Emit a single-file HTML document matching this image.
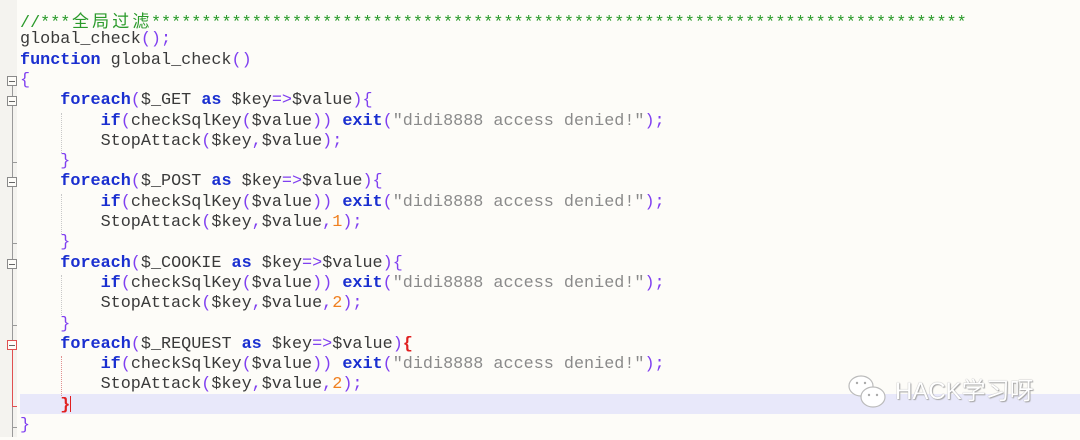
<!DOCTYPE html>
<html><head><meta charset="utf-8"><style>
html,body{margin:0;padding:0}
body{width:1080px;height:437px;background:#fdfcf8;position:relative;overflow:hidden;font-family:"Liberation Mono",monospace;font-size:16.8px;}
.gut{position:absolute;left:0;top:0;width:17px;height:437px;background:#f4f3ef}
.vl{position:absolute;left:12px;width:1px;background:#9a9a9a}
.box{position:absolute;left:7px;width:10px;height:10px;border:1px solid #8a8a8a;background:#fdfcf8;box-sizing:border-box}
.box:after{content:"";position:absolute;left:1px;top:3.5px;width:6px;height:1px;background:#666}
.tk{position:absolute;left:12px;width:5px;height:1px;background:#9a9a9a}
.ln{position:absolute;left:20px;height:20.3px;line-height:20.3px;white-space:pre;color:#3a3a3a}
.k{color:#1a2fd0;font-weight:bold}
.p{color:#8040f0}
.c{color:#2a9a2a}
.s{color:#8a8a8a}
.n{color:#f08020}
.cj{font-family:"Noto Sans CJK SC",sans-serif;display:inline-block;width:20.16px;text-align:center;font-size:17px}
.hl{position:absolute;left:20px;top:394px;width:1060px;height:20px;background:#e8e8fa}
.ig{position:absolute;width:0;border-left:1px dotted #c8c8c8}
#w{position:absolute;left:0;top:3px;width:1080px;height:437px}
</style></head><body>
<div class="gut"></div>
<div class="hl"></div>
<div class="vl" style="top:77px;height:360px"></div>
<div class="vl" style="top:345px;height:62px;background:#e05050;left:12px"></div>
<div class="tk" style="top:162px"></div>
<div class="tk" style="top:243px"></div>
<div class="tk" style="top:325px"></div>
<div class="tk" style="top:406px;background:#e05050"></div>
<div class="tk" style="top:427px"></div>
<div class="box" style="top:76px"></div>
<div class="box" style="top:96px"></div>
<div class="box" style="top:177px"></div>
<div class="box" style="top:259px"></div>
<div class="box" style="top:340px;border-color:#e05050"></div>
<div class="ig" style="left:61px;top:113px;height:40px"></div>
<div class="ig" style="left:61px;top:194px;height:40px"></div>
<div class="ig" style="left:61px;top:275px;height:40px"></div>
<div class="ig" style="left:61px;top:356px;height:40px;border-color:#e09090"></div>
<div id="w">
<div class="ln" style="top:7px"><span class="c">//***<span class="cj">全</span><span class="cj">局</span><span class="cj">过</span><span class="cj">滤</span>*********************************************************************************</span></div>
<div class="ln" style="top:27.3px">global_check<span class="p">();</span></div>
<div class="ln" style="top:47.6px"><span class="k">function</span> global_check<span class="p">()</span></div>
<div class="ln" style="top:67.9px"><span class="p">{</span></div>
<div class="ln" style="top:88.2px">    <span class="k">foreach</span><span class="p">(</span>$_GET <span class="k">as</span> $key<span class="p">=&gt;</span>$value<span class="p">){</span></div>
<div class="ln" style="top:108.5px">        <span class="k">if</span><span class="p">(</span>checkSqlKey<span class="p">(</span>$value<span class="p">))</span> <span class="k">exit</span><span class="p">(</span><span class="s">"didi8888 access denied!"</span><span class="p">);</span></div>
<div class="ln" style="top:128.8px">        StopAttack<span class="p">(</span>$key<span class="p">,</span>$value<span class="p">);</span></div>
<div class="ln" style="top:149.1px">    <span class="p">}</span></div>
<div class="ln" style="top:169.4px">    <span class="k">foreach</span><span class="p">(</span>$_POST <span class="k">as</span> $key<span class="p">=&gt;</span>$value<span class="p">){</span></div>
<div class="ln" style="top:189.7px">        <span class="k">if</span><span class="p">(</span>checkSqlKey<span class="p">(</span>$value<span class="p">))</span> <span class="k">exit</span><span class="p">(</span><span class="s">"didi8888 access denied!"</span><span class="p">);</span></div>
<div class="ln" style="top:210px">        StopAttack<span class="p">(</span>$key<span class="p">,</span>$value<span class="p">,</span><span class="n">1</span><span class="p">);</span></div>
<div class="ln" style="top:230.3px">    <span class="p">}</span></div>
<div class="ln" style="top:250.6px">    <span class="k">foreach</span><span class="p">(</span>$_COOKIE <span class="k">as</span> $key<span class="p">=&gt;</span>$value<span class="p">){</span></div>
<div class="ln" style="top:270.9px">        <span class="k">if</span><span class="p">(</span>checkSqlKey<span class="p">(</span>$value<span class="p">))</span> <span class="k">exit</span><span class="p">(</span><span class="s">"didi8888 access denied!"</span><span class="p">);</span></div>
<div class="ln" style="top:291.2px">        StopAttack<span class="p">(</span>$key<span class="p">,</span>$value<span class="p">,</span><span class="n">2</span><span class="p">);</span></div>
<div class="ln" style="top:311.5px">    <span class="p">}</span></div>
<div class="ln" style="top:331.8px">    <span class="k">foreach</span><span class="p">(</span>$_REQUEST <span class="k">as</span> $key<span class="p">=&gt;</span>$value<span class="p">)</span><span style="color:#e02020;font-weight:bold">{</span></div>
<div class="ln" style="top:352.1px">        <span class="k">if</span><span class="p">(</span>checkSqlKey<span class="p">(</span>$value<span class="p">))</span> <span class="k">exit</span><span class="p">(</span><span class="s">"didi8888 access denied!"</span><span class="p">);</span></div>
<div class="ln" style="top:372.4px">        StopAttack<span class="p">(</span>$key<span class="p">,</span>$value<span class="p">,</span><span class="n">2</span><span class="p">);</span></div>
<div class="ln" style="top:392.7px">    <span style="color:#e02020;font-weight:bold">}</span><span style="display:inline-block;width:1px;height:16px;background:#e02020;vertical-align:middle"></span></div>
<div class="ln" style="top:413px"><span class="p">}</span></div>
</div>
<svg style="position:absolute;left:847px;top:373px" width="44" height="40" viewBox="0 0 44 40">
<ellipse cx="14" cy="13" rx="12" ry="10" fill="#fff" stroke="#bbb" stroke-width="1.2"/>
<ellipse cx="26" cy="24" rx="12" ry="10" fill="#fff" stroke="#bbb" stroke-width="1.2"/>
<circle cx="10" cy="10" r="1.2" fill="#aaa"/><circle cx="18" cy="10" r="1.2" fill="#aaa"/>
<circle cx="22" cy="22" r="1.2" fill="#aaa"/><circle cx="30" cy="22" r="1.2" fill="#aaa"/>
</svg>
<div style="position:absolute;left:895px;top:378px;font-family:'Liberation Sans','Noto Sans CJK SC',sans-serif;font-size:24px;color:#fff;text-shadow:0 0 1px #888,1px 1px 1px #aaa;line-height:28px">HACK学习呀</div>
</body></html>
